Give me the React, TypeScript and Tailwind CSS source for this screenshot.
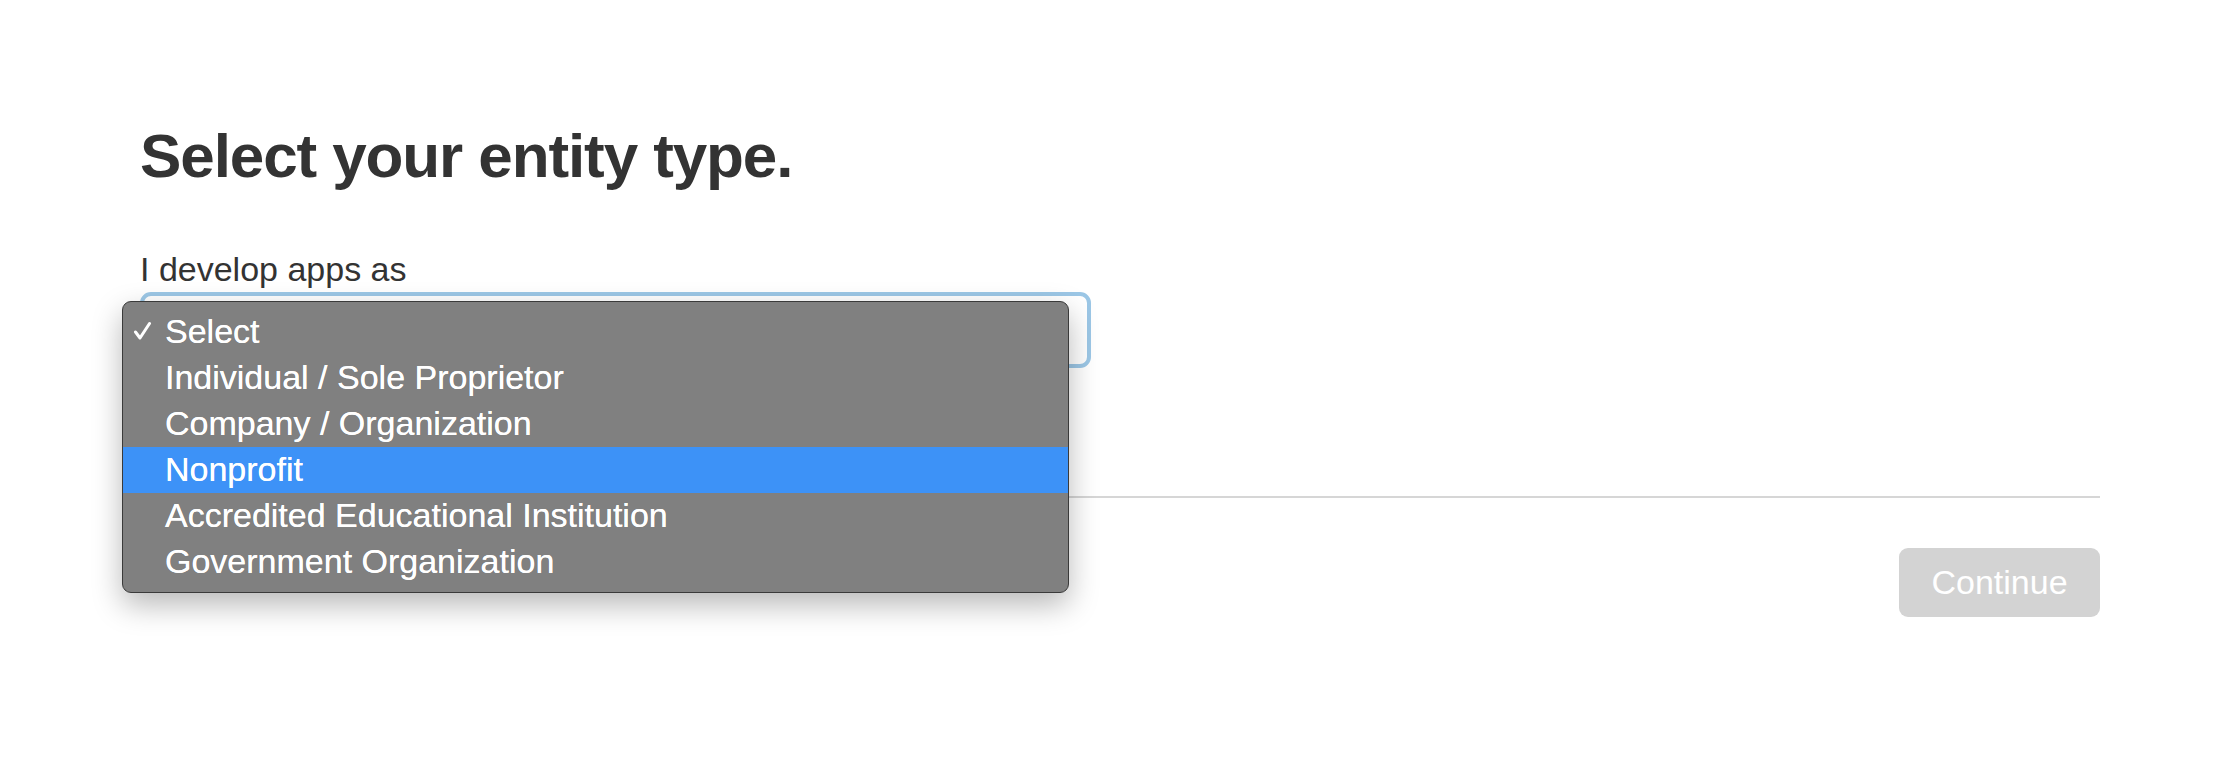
import { useState } from "react";

const options = [
  "Select",
  "Individual / Sole Proprietor",
  "Company / Organization",
  "Nonprofit",
  "Accredited Educational Institution",
  "Government Organization",
];

function Check() {
  return (
    <svg width="19" height="19" viewBox="0 0 19 19" fill="none">
      <path
        d="M2.5 11 L7 17 L16.5 2.5"
        stroke="white"
        strokeWidth="3"
        strokeLinecap="round"
        strokeLinejoin="round"
      />
    </svg>
  );
}

export default function App() {
  const [selected] = useState(0);
  const [hovered, setHovered] = useState(3);

  return (
    <div
      className="min-h-[758px] bg-white pl-[140px] pr-[134px] pt-[125px] text-[#333333]"
      style={{ fontFamily: '"Liberation Sans", Arial, sans-serif' }}
    >
      <h1 className="text-[62px] leading-[62px] font-bold tracking-[-1.1px] text-[#333333]">
        Select your entity type.
      </h1>

      <label className="mt-[65px] block text-[34px] leading-[34px]">
        I develop apps as
      </label>

      {/* select with open menu */}
      <div className="relative mt-[6px] h-[76px] w-[951px] rounded-[11px] border-4 border-[#9cc7e6] bg-white">
        <div className="absolute left-[-22px] top-[5px] z-10 w-[947px] rounded-[9px] border border-[#3a3a3a] bg-[#808080] py-[7px] shadow-[0_12px_30px_rgba(0,0,0,0.28)]">
          {options.map((o, i) => (
            <div
              key={o}
              onMouseEnter={() => setHovered(i)}
              className={
                "relative flex h-[46px] items-center pl-[42px] text-[34px] leading-[46px] text-white " +
                (i === hovered ? "bg-[#3d92f7]" : "")
              }
            >
              {i === selected && (
                <span className="absolute left-[10px] top-[12px]">
                  <Check />
                </span>
              )}
              <span className="-mt-[2px] [text-shadow:0_0_0.6px_white]">{o}</span>
            </div>
          ))}
        </div>
      </div>

      <div className="mt-[128px] h-[2px] w-full bg-[#d6d6d6]" />

      <div className="mt-[50px] flex justify-end">
        <button
          disabled
          className="h-[69px] w-[201px] rounded-[9px] bg-[#d3d3d3] text-[34px] text-white"
        >
          Continue
        </button>
      </div>
    </div>
  );
}
